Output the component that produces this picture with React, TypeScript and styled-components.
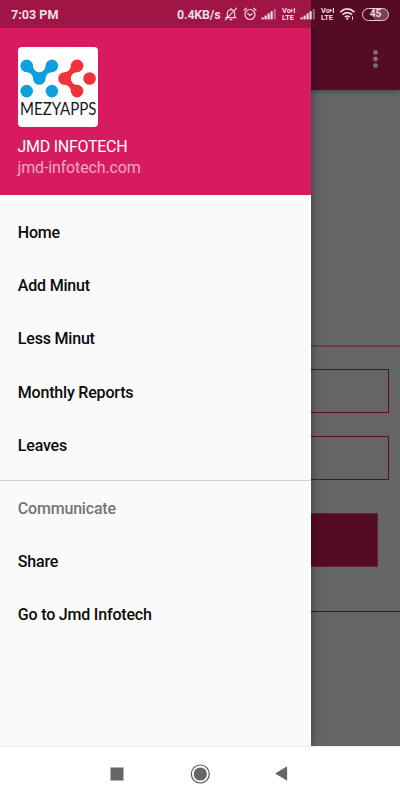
import React from 'react';
import styled, { createGlobalStyle } from 'styled-components';

const GlobalStyle = createGlobalStyle`
  * { box-sizing: border-box; }
  body { margin: 0; font-family: Roboto, sans-serif; background: #fff; }
`;

const Phone = styled.div`
  position: relative;
  display: flex;
  flex-direction: column;
  width: 400px;
  height: 800px;
  overflow: hidden;
`;

const Content = styled.main`
  position: relative;
  flex: 1;
  display: flex;
  flex-direction: column;
  background: #656565;
  overflow: hidden;
`;

const Toolbar = styled.header`
  display: flex;
  align-items: center;
  justify-content: flex-end;
  height: 90px;
  padding: 28px 22px 0 0;
  background: #560b25;
  box-shadow: 0 1px 5px rgba(0, 0, 0, 0.35);
`;

const Form = styled.section`
  display: flex;
  flex-direction: column;
  height: 267px;
  margin-top: 255px;
  padding: 22px 11px 0;
  border-top: 2px solid #6d3a4a;
  border-bottom: 1px solid #560b25;
`;

const Field = styled.div`
  height: 44px;
  margin-bottom: 23px;
  border: 1px solid #5c0c29;
`;

const Submit = styled.div`
  height: 54px;
  margin: 10px 11px 0;
  background: #560b25;
  border: 1px solid #5f2337;
`;

const Drawer = styled.aside`
  position: absolute;
  inset: 0 auto 0 0;
  width: 311px;
  display: flex;
  flex-direction: column;
  background: #fafafa;
  box-shadow: 0 0 10px rgba(0, 0, 0, 0.4);
`;

const Profile = styled.div`
  height: 195px;
  flex: none;
  padding: 46.5px 17.5px 0;
  background: #d81b60;
`;

const LogoCard = styled.div`
  width: 80.5px;
  height: 80.5px;
  border-radius: 4px;
  background: #fff;
  svg { display: block; overflow: visible; }
`;

const Name = styled.div`
  margin-top: 9.4px;
  font-size: 16px;
  line-height: 21px;
  letter-spacing: -0.27px;
  color: #fff;
`;

const Site = styled.div`
  font-size: 16px;
  line-height: 21px;
  letter-spacing: -0.14px;
  color: rgba(255, 255, 255, 0.62);
`;

const Menu = styled.nav`
  padding-top: 10.6px;
`;

const MenuRow = styled.div<{ $muted?: boolean }>`
  display: flex;
  align-items: center;
  height: 53.33px;
  padding-left: 17.8px;
  font-size: 16px;
  font-weight: 500;
  letter-spacing: -0.19px;
  color: ${(p) => (p.$muted ? '#757575' : '#0a0a0a')};
`;

const Divider = styled.div`
  height: 1px;
  margin: 7.7px 0 0.6px;
  background: #d3d3d3;
`;

const StatusBar = styled.div`
  position: absolute;
  inset: 0 0 auto 0;
  height: 28px;
  display: flex;
  align-items: center;
  justify-content: space-between;
  padding: 0 11px;
  background: linear-gradient(90deg, #9e1546 311px, #560b25 311px);
  color: #f3dbe3;
  font-weight: 700;
`;

const Clock = styled.span`
  padding-top: 1px;
  font-size: 12.6px;
  line-height: 28px;
`;

const StatusIcons = styled.div`
  display: flex;
  align-items: center;
  height: 28px;
  svg { display: block; flex: none; }
`;

const Speed = styled.span`
  width: 47px;
  padding-top: 1px;
  font-size: 12.4px;
  letter-spacing: -0.15px;
  white-space: nowrap;
`;

const AlarmSlot = styled.span`
  margin: 0 4px 0 5px;
`;

const Volte = styled.span`
  display: flex;
  flex-direction: column;
  width: 14px;
  margin: 0 4px 0 5px;
  font-size: 7.4px;
  line-height: 7px;
`;

const VolteLine = styled.span`
  display: flex;
  align-items: center;
  height: 7px;
`;

const Battery = styled.span`
  display: flex;
  align-items: center;
  justify-content: center;
  width: 27px;
  height: 13px;
  margin-left: 6px;
  border: 1.5px solid #e5cbd4;
  border-radius: 7px;
  background: linear-gradient(90deg, #560b25 0 45%, #7b405b 45%);
  font-size: 10px;
  line-height: 10px;
`;

const NavBar = styled.footer`
  display: flex;
  align-items: center;
  justify-content: space-between;
  height: 54px;
  padding: 0 112px 0 110px;
  background: #fff;
  border-top: 1px solid #f0f0f0;
  svg { display: block; }
`;

const Logo = () => (
  <LogoCard>
    <svg width="80" height="80" viewBox="0 0 80 80">
      <g fill="#109fdd">
        <path d="M2.4 18.9A6.3 6.3 0 0 1 15 18.9A6.3 6.3 0 0 0 27.6 18.9A6.3 6.3 0 1 1 33.9 25.2A6.3 6.3 0 0 0 27.6 31.5A6.3 6.3 0 0 1 15 31.5A6.3 6.3 0 0 0 8.7 25.2A6.3 6.3 0 0 1 2.4 18.9Z" />
        <circle cx="8.7" cy="44.1" r="6.3" />
        <circle cx="33.9" cy="44.1" r="6.3" />
      </g>
      <g fill="#ef3439">
        <path d="M59.1 12.6A6.3 6.3 0 0 1 59.1 25.2A6.3 6.3 0 0 0 59.1 37.8A6.3 6.3 0 1 1 52.8 44.1A6.3 6.3 0 0 0 46.5 37.8A6.3 6.3 0 0 1 46.5 25.2A6.3 6.3 0 0 0 52.8 18.9A6.3 6.3 0 0 1 59.1 12.6Z" />
        <circle cx="71.6" cy="31.5" r="6.3" />
      </g>
      <text x="2" y="67.8" textLength="76.5" lengthAdjust="spacingAndGlyphs" fontFamily="Lato, sans-serif" fontSize="16.4" fill="#171717">
        MEZYAPPS
      </text>
    </svg>
  </LogoCard>
);

const MuteIcon = () => (
  <svg width="14" height="14" viewBox="0 0 14 14" fill="none" stroke="#f0d3dd" strokeWidth="1.2" strokeLinecap="round">
    <path d="M1.6 10.6h10.6M3.4 10.2V6.2A3.6 3.6 0 0 1 10.6 6.2v4M7 2.5V1.4M6 12.6h2M1.3 12.8L12.6 1.2" />
  </svg>
);

const AlarmIcon = () => (
  <svg width="14" height="14" viewBox="0 0 14 14" fill="none" stroke="#f0d3dd" strokeWidth="1.2" strokeLinecap="round">
    <circle cx="7" cy="7.5" r="5" />
    <path d="M1 3.2L3.3 1.2M13 3.2L10.7 1.2M4.8 6.5L7 8.4l2.3-1.7" />
  </svg>
);

const SignalIcon = () => (
  <svg width="16" height="12" viewBox="0 0 16 12" fill="#f3dbe3">
    <rect x="0.5" y="9.4" width="2.2" height="2" />
    <rect x="3.5" y="7.6" width="2.2" height="3.8" />
    <rect x="6.5" y="5.4" width="2.2" height="6" />
    <rect x="9.5" y="3.2" width="2.2" height="8.2" />
    <rect x="12.7" y="1" width="2.2" height="10.4" opacity="0.42" />
  </svg>
);

const VolteMark = () => (
  <Volte>
    <VolteLine>
      Vo
      <svg width="4" height="5" viewBox="0 0 4 5" fill="#f3dbe3">
        <path d="M0 0.6L2 2.5L0 4.4zM2.8 0h1.2v5H2.8z" />
      </svg>
    </VolteLine>
    <VolteLine>LTE</VolteLine>
  </Volte>
);

const WifiIcon = () => (
  <svg width="17" height="14" viewBox="0 0 17 14" fill="none" stroke="#eed6df" strokeWidth="1.7">
    <path d="M1.2 5.1Q8.3-1.3 15.4 5.1M3.5 7.7Q8.3 3.4 13.1 7.7M5.8 10.1Q8.3 8 10.8 10.1" />
    <circle cx="8.3" cy="11.8" r="1.1" fill="#eed6df" stroke="none" />
    <path d="M13.5 9.4v3.4" strokeWidth="1" />
  </svg>
);

const mainItems = ['Home', 'Add Minut', 'Less Minut', 'Monthly Reports', 'Leaves'];
const communicateItems = ['Share', 'Go to Jmd Infotech'];

export default function App() {
  return (
    <Phone>
      <GlobalStyle />
      <Content>
        <Toolbar>
          <svg width="5" height="20" viewBox="0 0 5 20" fill="#777173">
            <circle cx="2.5" cy="3.4" r="2.4" />
            <circle cx="2.5" cy="10" r="2.4" />
            <circle cx="2.5" cy="16.6" r="2.4" />
          </svg>
        </Toolbar>
        <Form>
          <Field />
          <Field />
          <Submit />
        </Form>
        <Drawer>
          <Profile>
            <Logo />
            <Name>JMD INFOTECH</Name>
            <Site>jmd-infotech.com</Site>
          </Profile>
          <Menu>
            {mainItems.map((item) => <MenuRow key={item}>{item}</MenuRow>)}
            <Divider />
            <MenuRow $muted>Communicate</MenuRow>
            {communicateItems.map((item) => <MenuRow key={item}>{item}</MenuRow>)}
          </Menu>
        </Drawer>
      </Content>
      <NavBar>
        <svg width="14" height="14" viewBox="0 0 14 14"><rect x="0.5" y="0.5" width="13" height="13" fill="#666" /></svg>
        <svg width="20" height="20" viewBox="0 0 20 20">
          <circle cx="10.3" cy="10" r="9" fill="none" stroke="#555" strokeWidth="1.2" />
          <circle cx="10.3" cy="10" r="6.6" fill="#666" />
        </svg>
        <svg width="13" height="15" viewBox="0 0 13 15"><path d="M0.1 7.5L12.1 0.3v14.4z" fill="#666" /></svg>
      </NavBar>
      <StatusBar>
        <Clock>7:03 PM</Clock>
        <StatusIcons>
          <Speed>0.4KB/s</Speed>
          <MuteIcon />
          <AlarmSlot><AlarmIcon /></AlarmSlot>
          <SignalIcon />
          <VolteMark />
          <SignalIcon />
          <VolteMark />
          <WifiIcon />
          <Battery>45</Battery>
        </StatusIcons>
      </StatusBar>
    </Phone>
  );
}
